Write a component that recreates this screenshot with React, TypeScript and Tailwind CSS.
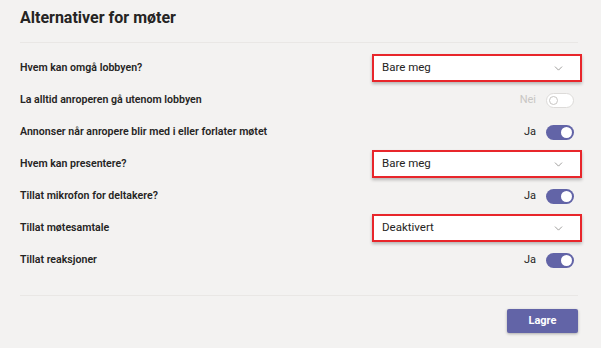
import { ChevronDown } from 'lucide-react';

type Row =
  | { kind: 'select'; label: string; value: string }
  | { kind: 'toggle'; label: string; on: boolean; disabled?: boolean };

const rows: Row[] = [
  { kind: 'select', label: 'Hvem kan omgå lobbyen?', value: 'Bare meg' },
  { kind: 'toggle', label: 'La alltid anroperen gå utenom lobbyen', on: false, disabled: true },
  { kind: 'toggle', label: 'Annonser når anropere blir med i eller forlater møtet', on: true },
  { kind: 'select', label: 'Hvem kan presentere?', value: 'Bare meg' },
  { kind: 'toggle', label: 'Tillat mikrofon for deltakere?', on: true },
  { kind: 'select', label: 'Tillat møtesamtale', value: 'Deaktivert' },
  { kind: 'toggle', label: 'Tillat reaksjoner', on: true },
];

function Select({ value }: { value: string }) {
  return (
    <div className="w-[210px] h-[28px] -mr-[4px] border-2 border-[#e8262b] bg-white shadow-[0_2px_3px_rgba(0,0,0,0.25)] flex items-center justify-between pl-[8px] pr-[15px]">
      <span className="text-[11.5px] text-[#252423]">{value}</span>
      <ChevronDown className="w-[13px] h-[13px] text-[#797775]" strokeWidth={1.3} />
    </div>
  );
}

function Toggle({ on, disabled }: { on: boolean; disabled?: boolean }) {
  return (
    <div className="flex items-center gap-[10px] mr-[4px]">
      <span className={`text-[11px] ${disabled ? 'text-[#c8c6c4]' : 'text-[#252423]'}`}>
        {on ? 'Ja' : 'Nei'}
      </span>
      {on ? (
        <div className="w-[28px] h-[15px] rounded-full bg-[#6264a7] flex items-center justify-end pr-[2px]">
          <div className="w-[11px] h-[11px] rounded-full bg-white" />
        </div>
      ) : (
        <div className="w-[28px] h-[15px] rounded-full bg-white border border-[#dddbd9] flex items-center pl-[2px]">
          <div className="w-[9px] h-[9px] rounded-full border border-[#c8c6c4]" />
        </div>
      )}
    </div>
  );
}

export default function App() {
  return (
    <div
      className="w-[601px] h-[348px] bg-[#f3f2f1] text-[#252423] overflow-hidden"
      style={{ fontFamily: 'Roboto, "Open Sans", sans-serif' }}
    >
      <div className="ml-[20px] w-[558px]">
        {/* Tittel */}
        <div className="h-[43px] border-b border-[#e9e7e5] pt-[7px]">
          <h1 className="text-[16px] font-bold leading-[22px]">Alternativer for møter</h1>
        </div>

        {/* Innstillinger */}
        <div className="pt-[9px]">
          {rows.map((row) => (
            <div key={row.label} className="h-[32px] flex items-center justify-between">
              <span className="text-[10.6px] font-semibold">{row.label}</span>
              {row.kind === 'select' ? (
                <Select value={row.value} />
              ) : (
                <Toggle on={row.on} disabled={row.disabled} />
              )}
            </div>
          ))}
        </div>

        <div className="mt-[19px] border-t border-[#e9e7e5]" />

        <div className="mt-[13px] flex justify-end">
          <button className="w-[71px] h-[24px] bg-[#6264a7] text-white text-[11px] font-bold rounded-[2px] shadow-[0_1px_3px_rgba(0,0,0,0.3)]">
            Lagre
          </button>
        </div>
      </div>
    </div>
  );
}
